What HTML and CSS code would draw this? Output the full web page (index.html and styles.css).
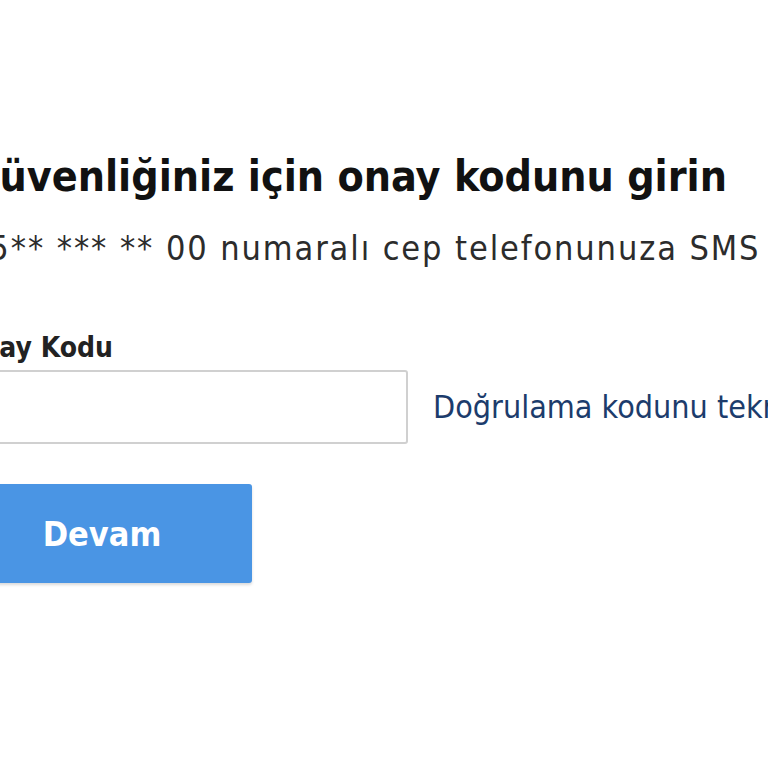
FILE: index.html
```html
<!DOCTYPE html>
<html lang="tr">
<head>
<meta charset="utf-8">
<link rel="stylesheet" href="styles.css">
</head>
<body>
<main class="page">
  <h1 class="title">Güvenliğiniz için onay kodunu girin</h1>
  <p class="subtitle">05** *** ** 00 numaralı cep telefonunuza SMS ile gönderilen onay kodunu girin.</p>
  <label class="label" for="code">Onay Kodu</label>
  <div class="row">
    <input class="input" id="code" type="text">
    <a class="link" href="#">Doğrulama kodunu tekrar gönder</a>
  </div>
  <button class="btn" type="button">Devam</button>
</main>
</body>
</html>
```
FILE: styles.css
```css
html, body {
  margin: 0;
  padding: 0;
  background: #ffffff;
  overflow: hidden;
  width: 768px;
  height: 768px;
}
.page {
  margin-left: -32px;
  padding-top: 150px;
  font-family: "DejaVu Sans Condensed", "DejaVu Sans", sans-serif;
  white-space: nowrap;
}
.title {
  margin: 0;
  font-size: 42.6px;
  font-weight: 700;
  color: #111;
  line-height: 52px;
}
.subtitle {
  margin: 26px 0 0;
  font-size: 34px;
  letter-spacing: 1.9px;
  color: #2c2c2c;
  line-height: 40px;
}
.label {
  display: block;
  margin: 63px 0 0 -8px;
  font-size: 28px;
  font-weight: 700;
  color: #222;
  line-height: 34px;
}
.row {
  display: flex;
  align-items: center;
  gap: 25px;
  margin-top: 5px;
}
.input {
  flex: 0 0 auto;
  width: 440px;
  height: 74px;
  box-sizing: border-box;
  border: 2px solid #d0d0d0;
  border-radius: 3px;
  background: #fff;
  font-size: 24px;
}
.link {
  flex: 0 0 auto;
  color: #1c3c6c;
  text-decoration: none;
  font-size: 32px;
}
.btn {
  display: block;
  margin-top: 40px;
  width: 284px;
  height: 99px;
  padding: 0 16px 0 0;
  border: none;
  border-radius: 3px;
  background: #4a95e4;
  color: #fff;
  font-family: inherit;
  font-size: 34px;
  font-weight: 700;
  box-shadow: 0 2px 3px rgba(0,0,0,0.15);
}
```
